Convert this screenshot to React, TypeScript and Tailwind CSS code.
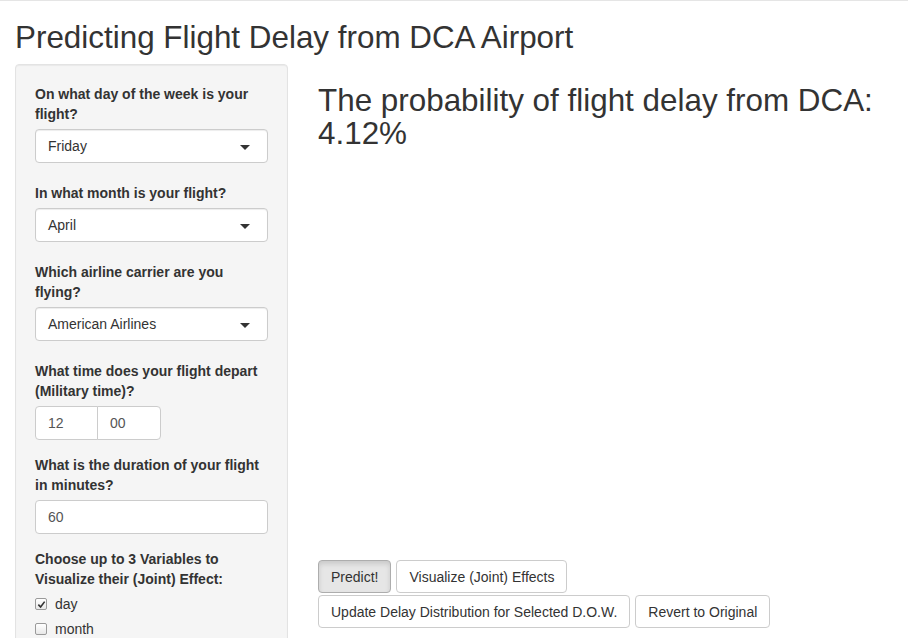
import React from "react";

const font = { fontFamily: '"Liberation Sans", Arial, sans-serif' };

function Caret() {
  return (
    <span className="absolute right-[17px] top-[15px] h-0 w-0 border-x-[5px] border-t-[5px] border-x-transparent border-t-[#333]" />
  );
}

function SelectBox({ value }: { value: string }) {
  return (
    <div className="relative mb-5 h-[34px] w-full rounded border border-[#ccc] bg-white pl-3 text-[14px] leading-[32px] text-[#333] shadow-[inset_0_1px_1px_rgba(0,0,0,0.075)]">
      {value}
      <Caret />
    </div>
  );
}

function Label({ children }: { children: React.ReactNode }) {
  return <div className="mb-[5px] text-[14px] font-bold leading-5 text-[#333]">{children}</div>;
}

function Check({ checked, label }: { checked?: boolean; label: string }) {
  return (
    <div className="mb-[5px] flex h-5 items-center text-[14px] text-[#333]">
      <span className="mr-[8px] flex h-[12px] w-[12px] items-center justify-center rounded-[2px] border border-[#9a9a9a] bg-gradient-to-b from-white to-[#e8e8e8]">
        {checked && (
          <svg width="9" height="9" viewBox="0 0 10 10">
            <path d="M1.5 5.2 L4 7.8 L8.5 1.8" fill="none" stroke="#333" strokeWidth="1.8" />
          </svg>
        )}
      </span>
      {label}
    </div>
  );
}

function Btn({ children, active }: { children: React.ReactNode; active?: boolean }) {
  return (
    <button
      className={
        "h-[33px] rounded border px-3 text-[14px] leading-5 text-[#333] " +
        (active
          ? "border-[#adadad] bg-[#e6e6e6] shadow-[inset_0_3px_5px_rgba(0,0,0,0.125)]"
          : "border-[#ccc] bg-white")
      }
    >
      {children}
    </button>
  );
}

export default function App() {
  return (
    <div className="h-[638px] w-[908px] overflow-hidden border-t border-[#e5e5e5] bg-white px-[15px]" style={font}>
      <h2 className="mb-[10px] mt-5 text-[31.4px] leading-[33px] text-[#333]">
        Predicting Flight Delay from DCA Airport
      </h2>
      <div className="flex">
        <div className="w-[273px] shrink-0">
          <div className="min-h-[600px] rounded border border-[#e3e3e3] bg-[#f5f5f5] p-[19px] shadow-[inset_0_1px_1px_rgba(0,0,0,0.05)]">
            <Label>On what day of the week is your flight?</Label>
            <SelectBox value="Friday" />
            <Label>In what month is your flight?</Label>
            <SelectBox value="April" />
            <Label>Which airline carrier are you flying?</Label>
            <SelectBox value="American Airlines" />
            <Label>What time does your flight depart (Military time)?</Label>
            <div className="mb-[15px] flex">
              <div className="h-[34px] w-[63px] rounded-l border border-[#ccc] bg-white pl-3 text-[14px] leading-[32px] text-[#555]">12</div>
              <div className="-ml-px h-[34px] w-[64px] rounded-r border border-[#ccc] bg-white pl-3 text-[14px] leading-[32px] text-[#555]">00</div>
            </div>
            <Label>What is the duration of your flight in minutes?</Label>
            <div className="mb-[15px] h-[34px] w-full rounded border border-[#ccc] bg-white pl-3 text-[14px] leading-[32px] text-[#555]">60</div>
            <Label>Choose up to 3 Variables to Visualize their (Joint) Effect:</Label>
            <Check checked label="day" />
            <Check label="month" />
            <Check label="carrier" />
          </div>
        </div>
        <div className="ml-[30px] flex-1">
          <h2 className="mb-[10px] mt-5 text-[31.4px] leading-[33px] text-[#333]">
            The probability of flight delay from DCA: 4.12%
          </h2>
          <div className="h-[400px]" />
          <div className="flex flex-col gap-[2px]">
            <div className="flex gap-[5px]">
              <Btn active>Predict!</Btn>
              <Btn>Visualize (Joint) Effects</Btn>
            </div>
            <div className="flex gap-[5px]">
              <Btn>Update Delay Distribution for Selected D.O.W.</Btn>
              <Btn>Revert to Original</Btn>
            </div>
          </div>
        </div>
      </div>
    </div>
  );
}
